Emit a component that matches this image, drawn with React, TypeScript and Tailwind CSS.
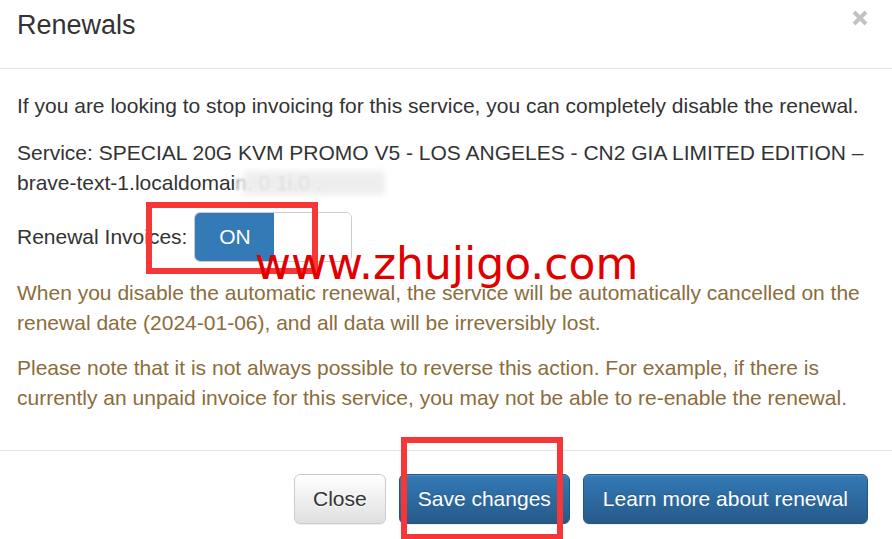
import React from "react";

export default function App() {
  return (
    <div className="relative w-[892px] h-[539px] overflow-hidden bg-white font-['Liberation_Sans',Arial,sans-serif] text-[#333]">
      {/* Header */}
      <div className="flex justify-between items-start pl-[17px] pr-[24px] pt-[6px] h-[69px] border-b border-[#e5e5e5]">
        <h4 className="text-[27px] leading-[38.6px] font-normal m-0">Renewals</h4>
        <button className="mt-[4px] p-0 bg-transparent border-0" aria-label="Close">
          <svg width="16" height="16" viewBox="0 0 16 16">
            <path d="M2 2 L14 14 M14 2 L2 14" stroke="#c2c2c2" strokeWidth="4" strokeLinecap="butt" />
          </svg>
        </button>
      </div>

      {/* Body */}
      <div className="pl-[17px] pr-[24px] pt-[22px] pb-[37px] text-[21px] leading-[30px]">
        <p className="mb-[17px]">
          If you are looking to stop invoicing for this service, you can completely disable the renewal.
        </p>
        <p className="mb-[14px]">
          Service: SPECIAL 20G KVM PROMO V5 - LOS ANGELES - CN2 GIA LIMITED EDITION – brave-text-1.localdomai
          <span className="relative inline-block align-top w-[150px] h-[30px]">
            <span className="absolute left-0 top-0 whitespace-nowrap text-[#999] blur-[1px]">n. 0 1i.0 .</span>
            <span className="absolute left-[8px] top-[3px] w-[142px] h-[24px] bg-[#ececec] blur-[3px] opacity-85"></span>
          </span>
        </p>
        <div className="flex items-center h-[50px] mb-[16px]">
          <span>Renewal Invoices:</span>
          <div className="ml-[7px] flex w-[158px] h-[50px] rounded-[6px] border border-[#ccc] overflow-hidden">
            <span className="w-[79px] h-full bg-[#337ab7] text-white flex items-center justify-center">ON</span>
            <span className="flex-1 bg-white"></span>
          </div>
        </div>
        <p className="mb-[15px] text-[#8a6d3b]">
          When you disable the automatic renewal, the service will be automatically cancelled on the renewal date (2024-01-06), and all data will be irreversibly lost.
        </p>
        <p className="text-[#8a6d3b]">
          Please note that it is not always possible to reverse this action. For example, if there is currently an unpaid invoice for this service, you may not be able to re-enable the renewal.
        </p>
      </div>

      {/* Footer */}
      <div className="flex justify-end gap-[13px] pt-[23px] pr-[24px] border-t border-[#e5e5e5]">
        <button className="h-[50px] px-[18px] text-[21px] rounded-[6px] border border-[#ccc] bg-linear-to-b from-white to-[#e0e0e0] text-[#333] [text-shadow:0_1px_0_#fff] shadow-[inset_0_1px_0_rgba(255,255,255,0.15),0_1px_1px_rgba(0,0,0,0.075)]">
          Close
        </button>
        <button className="h-[50px] px-[18px] text-[21px] rounded-[6px] border border-[#245580] bg-linear-to-b from-[#337ab7] to-[#265a88] text-white [text-shadow:0_-1px_0_rgba(0,0,0,0.2)] shadow-[inset_0_1px_0_rgba(255,255,255,0.15),0_1px_1px_rgba(0,0,0,0.075)]">
          Save changes
        </button>
        <button className="h-[50px] px-[19px] text-[21px] rounded-[6px] border border-[#245580] bg-linear-to-b from-[#337ab7] to-[#265a88] text-white [text-shadow:0_-1px_0_rgba(0,0,0,0.2)] shadow-[inset_0_1px_0_rgba(255,255,255,0.15),0_1px_1px_rgba(0,0,0,0.075)]">
          Learn more about renewal
        </button>
      </div>

      {/* Annotation overlays */}
      <div className="absolute left-[146px] top-[202px] w-[172px] h-[72px] border-[6px] border-[#f73737] pointer-events-none"></div>
      <div className="absolute left-[401px] top-[437px] w-[162px] h-[103px] border-[6px] border-[#f73737] pointer-events-none"></div>
      <div className="absolute left-[255px] top-[242px] text-[44px] leading-[44px] text-[#e00000] font-['DejaVu_Sans',sans-serif] whitespace-nowrap pointer-events-none">
        www.zhujigo.com
      </div>
    </div>
  );
}
